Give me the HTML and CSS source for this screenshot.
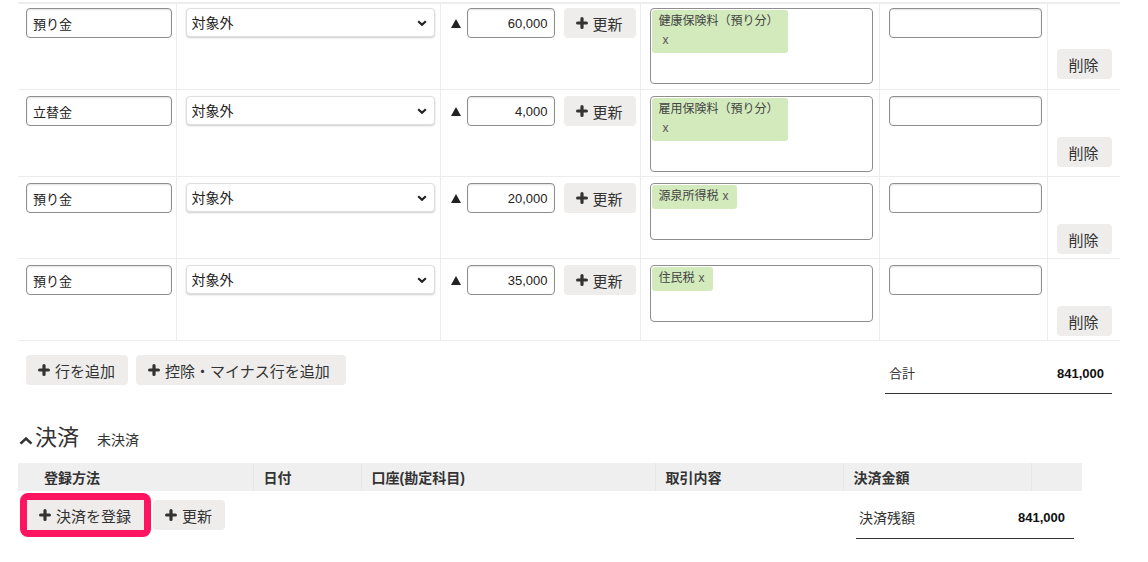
FILE: index.html
```html
<!DOCTYPE html>
<html lang="ja">
<head>
    <meta charset="UTF-8">
    <title>明細</title>
    <link rel="stylesheet" href="styles.css">
</head>
<body>
<div class="page">

    <table class="lines">
        <colgroup>
            <col style="width:158px">
            <col style="width:264px">
            <col style="width:200px">
            <col style="width:239px">
            <col style="width:168px">
            <col style="width:73px">
        </colgroup>
        <tr>
            <td><input class="field name" value="預り金"></td>
            <td>
                <span class="select-wrap">
                    <select class="tax"><option>対象外</option></select>
                    <svg class="chev" width="10" height="6" viewBox="0 0 10 6"><path d="M1.2 1.2L5 4.8l3.8-3.6" fill="none" stroke="#222" stroke-width="2.2"/></svg>
                </span>
            </td>
            <td class="amount-cell">
                <div class="amount">
                    <svg class="tri" width="10" height="9" viewBox="0 0 10 9"><path d="M5 0L10 9H0z" fill="#222"/></svg>
                    <input class="field num" value="60,000">
                    <button class="btn"><svg viewBox="0 0 12 12"><path d="M6 1.6v8.8M1.6 6h8.8" stroke="#333" stroke-width="3.2" stroke-linecap="round"/></svg>更新</button>
                </div>
            </td>
            <td>
                <div class="tagbox">
                    <span class="tag">健康保険料（預り分）<span class="x">x</span></span>
                    <div class="tag-entry"></div>
                </div>
            </td>
            <td><input class="field memo"></td>
            <td class="del-cell"><button class="btn">削除</button></td>
        </tr>
        <tr>
            <td><input class="field name" value="立替金"></td>
            <td>
                <span class="select-wrap">
                    <select class="tax"><option>対象外</option></select>
                    <svg class="chev" width="10" height="6" viewBox="0 0 10 6"><path d="M1.2 1.2L5 4.8l3.8-3.6" fill="none" stroke="#222" stroke-width="2.2"/></svg>
                </span>
            </td>
            <td class="amount-cell">
                <div class="amount">
                    <svg class="tri" width="10" height="9" viewBox="0 0 10 9"><path d="M5 0L10 9H0z" fill="#222"/></svg>
                    <input class="field num" value="4,000">
                    <button class="btn"><svg viewBox="0 0 12 12"><path d="M6 1.6v8.8M1.6 6h8.8" stroke="#333" stroke-width="3.2" stroke-linecap="round"/></svg>更新</button>
                </div>
            </td>
            <td>
                <div class="tagbox">
                    <span class="tag">雇用保険料（預り分）<span class="x">x</span></span>
                    <div class="tag-entry"></div>
                </div>
            </td>
            <td><input class="field memo"></td>
            <td class="del-cell"><button class="btn">削除</button></td>
        </tr>
        <tr>
            <td><input class="field name" value="預り金"></td>
            <td>
                <span class="select-wrap">
                    <select class="tax"><option>対象外</option></select>
                    <svg class="chev" width="10" height="6" viewBox="0 0 10 6"><path d="M1.2 1.2L5 4.8l3.8-3.6" fill="none" stroke="#222" stroke-width="2.2"/></svg>
                </span>
            </td>
            <td class="amount-cell">
                <div class="amount">
                    <svg class="tri" width="10" height="9" viewBox="0 0 10 9"><path d="M5 0L10 9H0z" fill="#222"/></svg>
                    <input class="field num" value="20,000">
                    <button class="btn"><svg viewBox="0 0 12 12"><path d="M6 1.6v8.8M1.6 6h8.8" stroke="#333" stroke-width="3.2" stroke-linecap="round"/></svg>更新</button>
                </div>
            </td>
            <td>
                <div class="tagbox">
                    <span class="tag">源泉所得税<span class="x">x</span></span>
                    <div class="tag-entry"></div>
                </div>
            </td>
            <td><input class="field memo"></td>
            <td class="del-cell"><button class="btn">削除</button></td>
        </tr>
        <tr>
            <td><input class="field name" value="預り金"></td>
            <td>
                <span class="select-wrap">
                    <select class="tax"><option>対象外</option></select>
                    <svg class="chev" width="10" height="6" viewBox="0 0 10 6"><path d="M1.2 1.2L5 4.8l3.8-3.6" fill="none" stroke="#222" stroke-width="2.2"/></svg>
                </span>
            </td>
            <td class="amount-cell">
                <div class="amount">
                    <svg class="tri" width="10" height="9" viewBox="0 0 10 9"><path d="M5 0L10 9H0z" fill="#222"/></svg>
                    <input class="field num" value="35,000">
                    <button class="btn"><svg viewBox="0 0 12 12"><path d="M6 1.6v8.8M1.6 6h8.8" stroke="#333" stroke-width="3.2" stroke-linecap="round"/></svg>更新</button>
                </div>
            </td>
            <td>
                <div class="tagbox">
                    <span class="tag">住民税<span class="x">x</span></span>
                    <div class="tag-entry"></div>
                </div>
            </td>
            <td><input class="field memo"></td>
            <td class="del-cell"><button class="btn">削除</button></td>
        </tr>
    </table>

    <div class="line-actions">
        <div class="btn-group">
            <button class="btn"><svg viewBox="0 0 12 12"><path d="M6 1.6v8.8M1.6 6h8.8" stroke="#333" stroke-width="3.2" stroke-linecap="round"/></svg>行を追加</button>
            <button class="btn wide"><svg viewBox="0 0 12 12"><path d="M6 1.6v8.8M1.6 6h8.8" stroke="#333" stroke-width="3.2" stroke-linecap="round"/></svg>控除・マイナス行を追加</button>
        </div>
        <div class="summary total">
            <span class="label">合計</span>
            <span class="value">841,000</span>
        </div>
    </div>

    <div class="pay-title">
        <svg class="caret" width="14" height="8" viewBox="0 0 14 8"><path d="M1.5 6.6L7 1.6l5.5 5" fill="none" stroke="#333" stroke-width="2.6"/></svg>
        <h2>決済</h2>
        <span class="status">未決済</span>
    </div>

    <table class="pay">
        <colgroup>
            <col style="width:235px">
            <col style="width:108px">
            <col style="width:294px">
            <col style="width:188px">
            <col style="width:188px">
            <col style="width:51px">
        </colgroup>
        <thead>
            <tr>
                <th>登録方法</th>
                <th>日付</th>
                <th>口座(勘定科目)</th>
                <th>取引内容</th>
                <th>決済金額</th>
                <th></th>
            </tr>
        </thead>
    </table>

    <div class="pay-actions">
        <div class="btn-group tight">
            <span class="highlight">
                <button class="btn"><svg viewBox="0 0 12 12"><path d="M6 1.6v8.8M1.6 6h8.8" stroke="#333" stroke-width="3.2" stroke-linecap="round"/></svg>決済を登録</button>
            </span>
            <button class="btn"><svg viewBox="0 0 12 12"><path d="M6 1.6v8.8M1.6 6h8.8" stroke="#333" stroke-width="3.2" stroke-linecap="round"/></svg>更新</button>
        </div>
        <div class="summary balance">
            <span class="label">決済残額</span>
            <span class="value">841,000</span>
        </div>
    </div>

</div>
</body>
</html>
```

FILE: styles.css
```css
* {
    box-sizing: border-box;
}
body {
    margin: 0;
    font-family: "Liberation Sans", "Noto Sans CJK JP", sans-serif;
    font-size: 14px;
    color: #333;
    background: #fff;
}
.page {
    padding: 2px 0 0 18px;
    width: 1120px;
}

/* line table */
.lines {
    width: 1102px;
    border-collapse: collapse;
    table-layout: fixed;
    border-top: 2px solid #ededed;
}
.lines td {
    vertical-align: top;
    padding: 6px 5px 4px 9px;
    border-top: 1px solid #ececec;
    border-left: 1px solid #ececec;
}
.lines td:first-child {
    border-left: none;
    padding-left: 8px;
}
.lines td.amount-cell {
    padding-right: 2px;
}
.lines tr:first-child td {
    padding-top: 4px;
    padding-bottom: 5px;
}
.lines tr:last-child td {
    border-bottom: 1px solid #ececec;
}
.field {
    display: block;
    height: 30px;
    border: 1px solid #8e8e8e;
    border-radius: 4px;
    box-shadow: inset 0 1px 2px rgba(0, 0, 0, 0.12);
    font-family: "Liberation Sans", "Noto Sans CJK JP", sans-serif;
    font-size: 13px;
    color: #222;
    padding: 0 6px;
    background: #fff;
}
.name {
    width: 146px;
}
.memo {
    width: 153px;
}
.num {
    width: 88px;
    text-align: right;
}
.select-wrap {
    position: relative;
    display: block;
    width: 249px;
}
.tax {
    appearance: none;
    -webkit-appearance: none;
    display: block;
    width: 100%;
    height: 29px;
    border: 1px solid #dedede;
    border-radius: 4px;
    box-shadow: 0 1px 2px rgba(0, 0, 0, 0.2);
    padding: 0 24px 0 5px;
    font-family: "Liberation Sans", "Noto Sans CJK JP", sans-serif;
    font-size: 14px;
    color: #222;
    background: #fff;
}
.chev {
    position: absolute;
    right: 8px;
    top: 12px;
}
.amount {
    display: flex;
    align-items: center;
}
.amount > * {
    flex-shrink: 0;
}
.tri {
    margin: 0 6px 0 1px;
}
.amount .btn {
    margin-left: 9px;
}
.btn {
    height: 30px;
    border: none;
    border-radius: 4px;
    background: #eeedec;
    color: #333;
    font-family: "Liberation Sans", "Noto Sans CJK JP", sans-serif;
    font-size: 15px;
    padding: 0 13px 0 12px;
    display: inline-flex;
    align-items: center;
    gap: 5px;
    cursor: pointer;
    white-space: nowrap;
}
.btn.wide {
    padding-right: 16px;
}
.btn svg {
    width: 12px;
    height: 12px;
}
.tagbox {
    width: 223px;
    border: 1px solid #8e8e8e;
    border-radius: 4px;
    padding: 1px;
    background: #fff;
}
.tag {
    display: block;
    width: fit-content;
    max-width: 136px;
    background: #d3eabd;
    border-radius: 3px;
    padding: 2px 8px 3px 7px;
    font-size: 12px;
    line-height: 19px;
    color: #444;
}
.tag .x {
    margin-left: 4px;
    color: #555;
}
.tag-entry {
    height: 29px;
}
.del-cell .btn {
    margin-top: 41px;
}

/* below the lines */
.line-actions {
    width: 1102px;
    display: flex;
    justify-content: space-between;
    align-items: flex-start;
    margin-top: 14px;
    padding: 0 8px;
}
.btn-group {
    display: flex;
    gap: 8px;
}
.btn-group.tight {
    gap: 2px;
    align-items: center;
}
.summary {
    display: flex;
    justify-content: space-between;
    line-height: 20px;
    border-bottom: 1.5px solid #333;
}
.summary .value {
    font-weight: bold;
    font-size: 13px;
    color: #111;
}
.total {
    width: 227px;
    padding: 9px 8px 9px 4px;
    font-size: 13px;
}
.balance {
    width: 218px;
    padding: 15px 9px 10px 3px;
}

/* settlement */
.pay-title {
    display: flex;
    align-items: baseline;
    height: 30px;
    margin-top: 29px;
}
.caret {
    margin: 0 2px 0 1px;
}
.pay-title h2 {
    margin: 0;
    font-size: 22px;
    font-weight: normal;
    line-height: 30px;
    color: #333;
}
.status {
    margin-left: 18px;
    font-size: 14px;
}
.pay {
    width: 1064px;
    border-collapse: collapse;
    table-layout: fixed;
    margin-top: 10px;
}
.pay th {
    background: #efefef;
    height: 28px;
    padding: 0 10px;
    text-align: left;
    font-size: 14px;
    font-weight: bold;
    color: #333;
    border-left: 1px solid #e6e6e6;
}
.pay th:first-child {
    border-left: none;
    padding-left: 26px;
}
.pay-actions {
    width: 1064px;
    display: flex;
    justify-content: space-between;
    align-items: flex-start;
    margin-top: 2px;
    padding: 0 8px 0 2px;
}
.highlight {
    display: inline-flex;
    border: 7px solid #ff1462;
    border-radius: 8px;
}
.highlight .btn {
    border-radius: 0;
}
```
